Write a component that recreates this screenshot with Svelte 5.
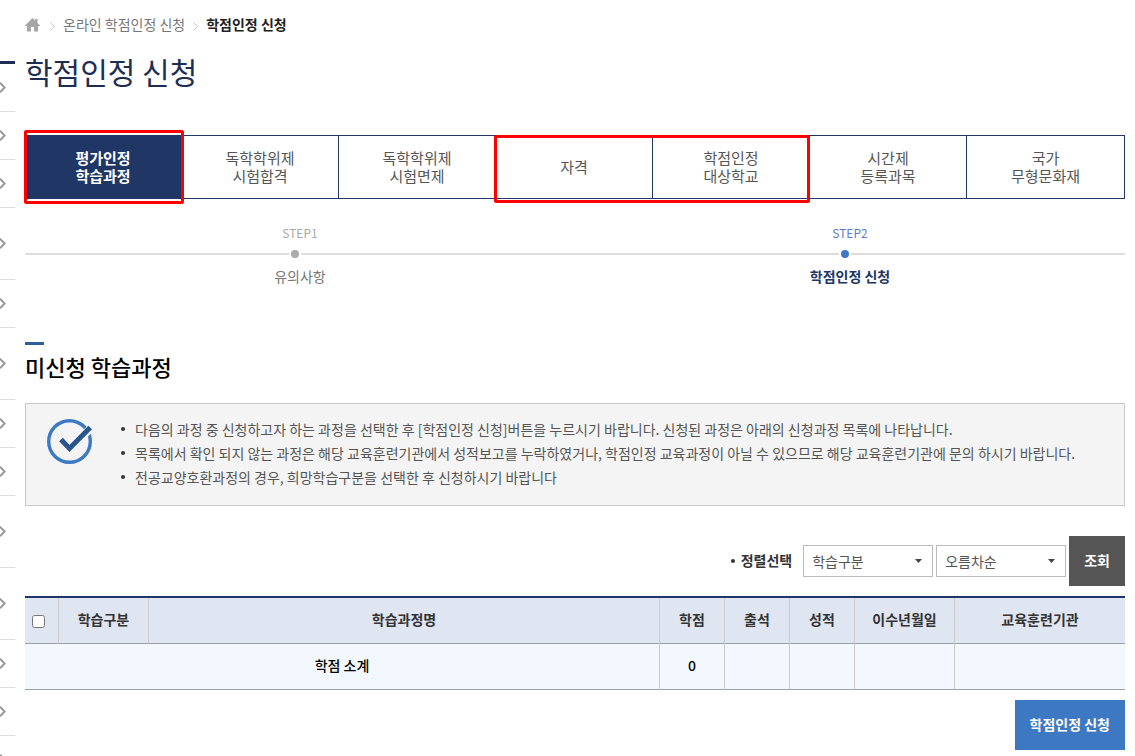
<script lang="ts">
  interface Tab {
    lines: string[];
    current?: boolean;
  }

  const tabs: Tab[] = [
    { lines: ["평가인정", "학습과정"], current: true },
    { lines: ["독학학위제", "시험합격"] },
    { lines: ["독학학위제", "시험면제"] },
    { lines: ["자격"] },
    { lines: ["학점인정", "대상학교"] },
    { lines: ["시간제", "등록과목"] },
    { lines: ["국가", "무형문화재"] }
  ];

  const steps = [
    { name: "STEP1", label: "유의사항", active: false },
    { name: "STEP2", label: "학점인정 신청", active: true }
  ];

  const notices = [
    "다음의 과정 중 신청하고자 하는 과정을 선택한 후 [학점인정 신청]버튼을 누르시기 바랍니다. 신청된 과정은 아래의 신청과정 목록에 나타납니다.",
    "목록에서 확인 되지 않는 과정은 해당 교육훈련기관에서 성적보고를 누락하였거나, 학점인정 교육과정이 아닐 수 있으므로 해당 교육훈련기관에 문의 하시기 바랍니다.",
    "전공교양호환과정의 경우, 희망학습구분을 선택한 후 신청하시기 바랍니다"
  ];

  // true = two-line menu entry
  const sideItems = [false, false, false, true, false, true, false, false, true, true, false, false, false];

  let sortKey = $state("type");
  let sortOrder = $state("asc");
  let allChecked = $state(false);
</script>

<div class="page">
  <aside class="side">
    <ul class="side__list">
      {#each sideItems as tall, i (i)}
        <li class="side__item" class:side__item--tall={tall}>
          <svg width="6" height="11" viewBox="0 0 6 11" aria-hidden="true">
            <path d="M0 .8 4.7 5.5 0 10.2" fill="none" stroke="#999" stroke-width="2" />
          </svg>
        </li>
      {/each}
    </ul>
  </aside>

  <main class="content">
    <nav class="crumbs">
      <a class="crumbs__home" href="#home" aria-label="홈">
        <svg width="15" height="14" viewBox="0 0 15 14" aria-hidden="true">
          <path d="M7.5 0 10 2.5V1h2.5v4L15 7.5V8h-2v5.5H9V9H6v4.5H2V8H0v-.5z" fill="#a6a6a6" />
        </svg>
      </a>
      <svg class="crumbs__sep" width="5" height="9" viewBox="0 0 5 9" aria-hidden="true">
        <path d="M.5.5l4 4-4 4" fill="none" stroke="#c8c8c8" />
      </svg>
      <a href="#online">온라인 학점인정 신청</a>
      <svg class="crumbs__sep" width="5" height="9" viewBox="0 0 5 9" aria-hidden="true">
        <path d="M.5.5l4 4-4 4" fill="none" stroke="#c8c8c8" />
      </svg>
      <strong>학점인정 신청</strong>
    </nav>

    <h1>학점인정 신청</h1>

    <div class="tabs">
      {#each tabs as tab, i (i)}
        <a class="tab" class:tab--current={tab.current} href="#tab{i + 1}">
          {#each tab.lines as line}
            <span>{line}</span>
          {/each}
        </a>
      {/each}
      <div class="mark mark--first"></div>
      <div class="mark mark--pair"></div>
    </div>

    <ol class="steps">
      {#each steps as step (step.name)}
        <li class="step" class:step--active={step.active}>
          <span class="step__name">{step.name}</span>
          <span class="step__line"><i class="step__dot"></i></span>
          <span class="step__label">{step.label}</span>
        </li>
      {/each}
    </ol>

    <h2>미신청 학습과정</h2>

    <section class="notice">
      <svg class="notice__icon" width="46" height="46" viewBox="0 0 46 46" aria-hidden="true">
        <circle cx="22.5" cy="22.5" r="20.8" fill="none" stroke="#3d79c3" stroke-width="3.4" />
        <path d="M14 22 22.5 30 43 10" fill="none" stroke="#f4f4f4" stroke-width="8" />
        <path d="M14 20.5 22.5 29.5 43.2 8.5" fill="none" stroke="#29558d" stroke-width="5" />
      </svg>
      <ul class="notice__list">
        {#each notices as notice}
          <li>{notice}</li>
        {/each}
      </ul>
    </section>

    <form class="sort" onsubmit={(event) => event.preventDefault()}>
      <label class="sort__label" for="sort-key">정렬선택</label>
      <span class="select">
        <select id="sort-key" bind:value={sortKey}>
          <option value="type">학습구분</option>
          <option value="name">학습과정명</option>
        </select>
        <svg width="7" height="4" viewBox="0 0 7 4" aria-hidden="true"><path d="M0 0h7L3.5 4z" fill="#444" /></svg>
      </span>
      <span class="select">
        <select aria-label="정렬순서" bind:value={sortOrder}>
          <option value="asc">오름차순</option>
          <option value="desc">내림차순</option>
        </select>
        <svg width="7" height="4" viewBox="0 0 7 4" aria-hidden="true"><path d="M0 0h7L3.5 4z" fill="#444" /></svg>
      </span>
      <button class="btn btn--dark" type="submit">조회</button>
    </form>

    <table>
      <colgroup>
        <col class="col-check" />
        <col class="col-type" />
        <col />
        <col class="col-score" />
        <col class="col-score" />
        <col class="col-score" />
        <col class="col-date" />
        <col class="col-org" />
      </colgroup>
      <thead>
        <tr>
          <th><input type="checkbox" aria-label="전체선택" bind:checked={allChecked} /></th>
          <th>학습구분</th>
          <th>학습과정명</th>
          <th>학점</th>
          <th>출석</th>
          <th>성적</th>
          <th>이수년월일</th>
          <th>교육훈련기관</th>
        </tr>
      </thead>
      <tbody>
        <tr>
          <td colspan="3">학점 소계</td>
          <td>0</td>
          <td></td>
          <td></td>
          <td></td>
          <td></td>
        </tr>
      </tbody>
    </table>

    <div class="actions">
      <button class="btn btn--blue" type="button">학점인정 신청</button>
    </div>
  </main>
</div>

<style>
  :global(body) {
    background: #fff;
  }

  .page {
    display: flex;
    gap: 10px;
    min-height: 100vh;
    font: 14px/24px "Noto Sans CJK KR", sans-serif;
    color: #555;
  }

  .page * {
    box-sizing: border-box;
  }

  a {
    color: inherit;
    text-decoration: none;
  }

  ul,
  ol {
    margin: 0;
    padding: 0;
    list-style: none;
  }

  /* only the right edge of the menu shows; it never stretches the page */
  .side {
    flex: none;
    width: 15px;
    padding-top: 61px;
    overflow: hidden;
    contain: size;
  }

  .side__list {
    border-top: 3px solid #1e2d52;
  }

  .side__item {
    display: flex;
    align-items: center;
    height: 48px;
    border-bottom: 1px solid #ddd;
  }

  .side__item--tall {
    height: 72px;
  }

  .content {
    flex: 1;
    min-width: 0;
    padding: 12px 10px 6px 0;
  }

  .crumbs {
    display: flex;
    align-items: center;
    color: #777;
  }

  .crumbs__home {
    display: flex;
    margin-right: 2px;
    padding-top: 2px;
  }

  .crumbs__sep {
    margin: 4px 8px 0;
  }

  .crumbs strong {
    color: #222;
    font-weight: 700;
  }

  h1 {
    margin: 15px 0 44px;
    font-size: 30px;
    line-height: 40px;
    font-weight: 400;
    color: #1e2d52;
  }

  .tabs {
    position: relative;
    display: grid;
    grid-template-columns: repeat(7, 1fr);
    height: 64px;
    border: 1px solid #203664;
    border-left: 0;
    font-size: 15px;
    line-height: 18px;
  }

  .tab {
    display: flex;
    flex-direction: column;
    align-items: center;
    justify-content: center;
    border-right: 1px solid #203664;
  }

  .tab:nth-child(7) {
    border-right: 0;
  }

  .tab--current {
    background: #203664;
    color: #fff;
    font-weight: 700;
  }

  .mark {
    position: absolute;
    border: 3px solid #f00;
    border-radius: 2px;
    pointer-events: none;
  }

  .mark--first {
    grid-column: 1 / 2;
    inset: -6px -2px -6px -1px;
  }

  .mark--pair {
    grid-column: 4 / 6;
    inset: -1px 0 -5px -2px;
  }

  .steps {
    display: grid;
    grid-template-columns: 1fr 1fr;
    margin-top: 22px;
  }

  .step {
    display: flex;
    flex-direction: column;
    text-align: center;
    color: #777;
  }

  .step__name {
    font-size: 12px;
    color: #aaa;
  }

  .step__line {
    position: relative;
    height: 2px;
    margin: 8px 0 9px;
    background: #ddd;
  }

  .step__dot {
    position: absolute;
    top: -5px;
    left: 50%;
    width: 12px;
    height: 12px;
    margin-left: -11px;
    border: 2px solid #fff;
    border-radius: 50%;
    background: #aaa;
  }

  .step--active .step__name {
    color: #5b7fc0;
  }

  .step--active .step__dot {
    background: #3d79c3;
  }

  .step--active .step__label {
    color: #203664;
    font-weight: 700;
  }

  h2 {
    margin: 54px 0 21px;
    font-size: 22px;
    line-height: 32px;
    font-weight: 500;
    color: #000;
  }

  h2::before {
    content: "";
    display: block;
    width: 19px;
    height: 3px;
    margin-bottom: 5px;
    background: #2d5d9b;
  }

  .notice {
    display: flex;
    gap: 28px;
    padding: 13px 21px 16px;
    border: 1px solid #c8c8c8;
    background: #f4f4f4;
  }

  .notice__icon {
    flex: none;
    margin-top: 2px;
  }

  .notice__list li {
    display: flex;
    align-items: center;
  }

  .notice__list li::before {
    content: "";
    flex: none;
    width: 4px;
    height: 4px;
    margin-right: 10px;
    border-radius: 50%;
    background: #333;
  }

  .sort {
    display: flex;
    align-items: center;
    justify-content: flex-end;
    gap: 3px;
    margin: 30px 0 10px;
  }

  .sort__label {
    display: flex;
    align-items: center;
    margin-right: 8px;
    padding-bottom: 2px;
    color: #333;
    font-weight: 700;
  }

  .sort__label::before {
    content: "";
    width: 4px;
    height: 4px;
    margin: 2px 6px 0 0;
    border-radius: 50%;
    background: #333;
  }

  .select {
    position: relative;
    width: 130px;
  }

  .select select {
    display: block;
    width: 100%;
    height: 32px;
    padding: 0 8px;
    border: 1px solid #bbb;
    border-radius: 0;
    background: #fff;
    appearance: none;
    font: inherit;
    color: #555;
  }

  .select svg {
    position: absolute;
    top: 14px;
    right: 11px;
    pointer-events: none;
  }

  .btn {
    height: 50px;
    padding: 0 15px 2px;
    border: 0;
    font: inherit;
    font-weight: 700;
    color: #fff;
    cursor: pointer;
  }

  .btn--dark {
    background: #555;
  }

  .btn--blue {
    background: #3d79c3;
  }

  table {
    width: 100%;
    border-top: 2px solid #203664;
    border-spacing: 0;
    table-layout: fixed;
  }

  .col-check {
    width: 34px;
  }

  .col-type {
    width: 90px;
  }

  .col-score {
    width: 65px;
  }

  .col-date {
    width: 100px;
  }

  .col-org {
    width: 170px;
  }

  th,
  td {
    height: 46px;
    padding: 0 0 3px;
    border-right: 1px solid #ccc;
    border-bottom: 1px solid #9aa1ad;
    text-align: center;
  }

  th:last-child,
  td:last-child {
    border-right: 0;
  }

  th {
    background: #dfe5f1;
    color: #333;
    font-weight: 700;
  }

  td {
    background: #f2f8fd;
    color: #000;
    font-weight: 500;
  }

  th input {
    display: block;
    width: 13px;
    height: 13px;
    margin: 5px auto 0 7px;
  }

  .actions {
    display: flex;
    justify-content: flex-end;
    margin-top: 10px;
  }
</style>
